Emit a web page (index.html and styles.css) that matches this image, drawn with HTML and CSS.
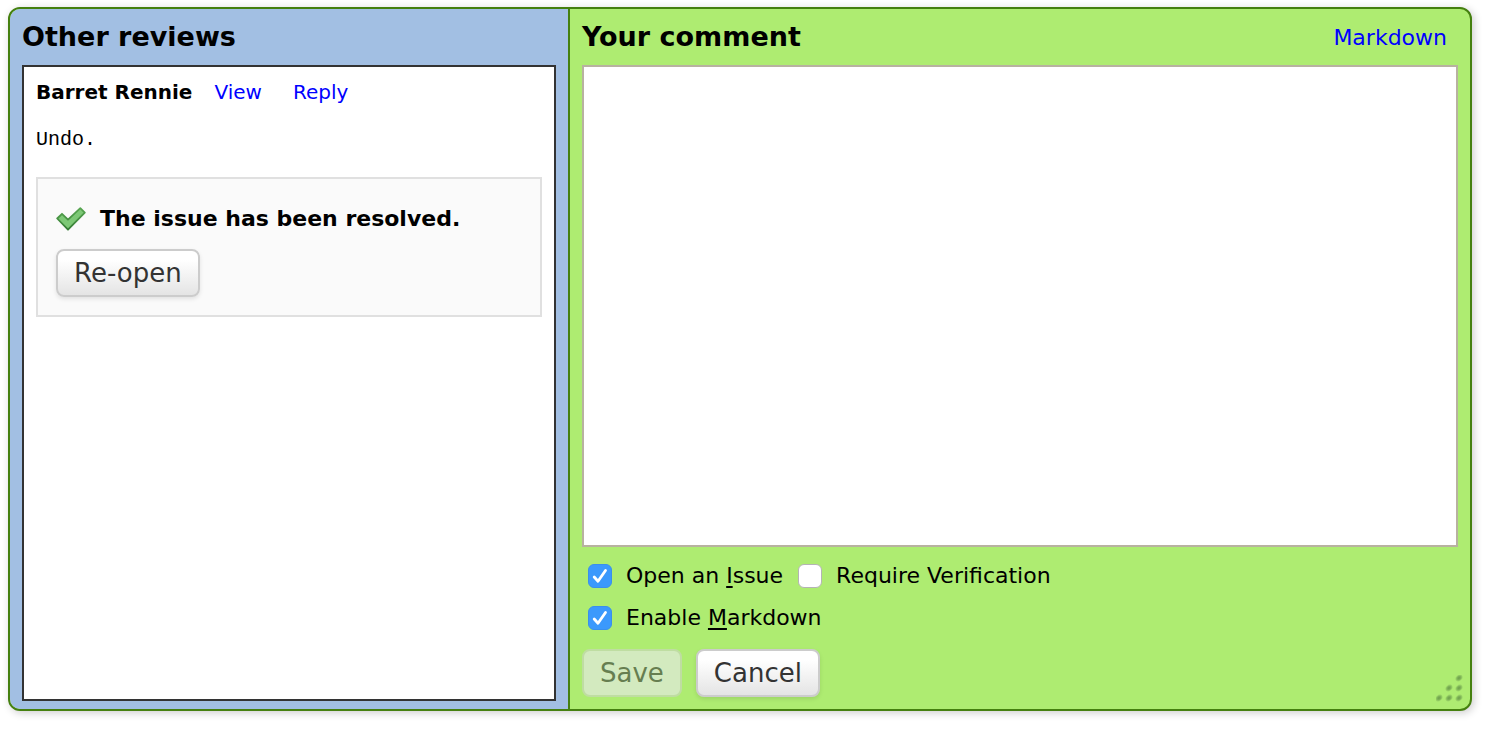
FILE: index.html
```html
<!DOCTYPE html>
<html lang="en">
<head>
<meta charset="utf-8">
<title>Your comment</title>
<link rel="stylesheet" href="styles.css">
</head>
<body>
<main class="comment-dialog">
  <section class="reviews">
    <h1 class="title">Other reviews</h1>
    <div class="review-list">
      <article class="review">
        <header class="review-header">
          <strong class="reviewer">Barret Rennie</strong>
          <a class="link" href="#view">View</a>
          <a class="link" href="#reply">Reply</a>
        </header>
        <pre class="review-text">Undo.</pre>
        <div class="issue">
          <p class="issue-state">
            <svg class="issue-icon" viewBox="0 0 30 24" aria-hidden="true">
              <defs>
                <linearGradient id="edge" x1="0" y1="0" x2="0" y2="1">
                  <stop offset="0" stop-color="#57a550"/>
                  <stop offset="1" stop-color="#347c34"/>
                </linearGradient>
              </defs>
              <path d="M1.2 11.5 L6 6.8 L12 12.6 L24.3 1.2 L28.8 5.6 L12 22.7 Z" fill="#7dc876" stroke="url(#edge)" stroke-width="1.8" stroke-linejoin="round"/>
            </svg>
            <strong>The issue has been resolved.</strong>
          </p>
          <button class="button" type="button">Re-open</button>
        </div>
      </article>
    </div>
  </section>
  <form class="comment">
    <header class="comment-header">
      <h1 class="title"><label for="comment-text">Your comment</label></h1>
      <a class="markdown-link" href="#markdown">Markdown</a>
    </header>
    <textarea class="comment-text" id="comment-text"></textarea>
    <div class="options">
      <div class="option-row">
        <span class="option"><input class="checkbox" type="checkbox" id="open-issue" checked><label for="open-issue">Open an <u>I</u>ssue</label></span>
        <span class="option"><input class="checkbox" type="checkbox" id="verify"><label for="verify">Require Verification</label></span>
      </div>
      <div class="option-row">
        <span class="option"><input class="checkbox" type="checkbox" id="markdown" checked><label for="markdown">Enable <u>M</u>arkdown</label></span>
      </div>
    </div>
    <div class="actions">
      <button class="button" type="submit" disabled>Save</button>
      <button class="button" type="button">Cancel</button>
    </div>
    <svg class="grip" viewBox="0 0 28 28" aria-hidden="true">
      <defs>
        <radialGradient id="dot" cx="0.5" cy="0.5" r="0.5">
          <stop offset="0" stop-color="#6b9d49"/>
          <stop offset="0.5" stop-color="#7fb457"/>
          <stop offset="1" stop-color="#a2dd6b"/>
        </radialGradient>
      </defs>
      <g fill="url(#dot)">
        <ellipse cx="23" cy="3" rx="4" ry="3" transform="rotate(-40 23 3)"/>
        <ellipse cx="13" cy="13" rx="4" ry="3" transform="rotate(-40 13 13)"/>
        <ellipse cx="23" cy="13" rx="4" ry="3" transform="rotate(-40 23 13)"/>
        <ellipse cx="3" cy="23" rx="4" ry="3" transform="rotate(-40 3 23)"/>
        <ellipse cx="13" cy="23" rx="4" ry="3" transform="rotate(-40 13 23)"/>
        <ellipse cx="23" cy="23" rx="4" ry="3" transform="rotate(-40 23 23)"/>
      </g>
    </svg>
  </form>
</main>
</body>
</html>
```
FILE: styles.css
```css
* {
  box-sizing: border-box;
}

body {
  min-height: 100vh;
  margin: 0;
  padding: 7px 17px 20px 8px;
  background: #fff;
  color: #000;
  font-family: Verdana, "DejaVu Sans", sans-serif;
  font-size: 22px;
}

.comment-dialog {
  display: grid;
  grid-template-columns: 560px 1fr;
  border: 2px solid #45800f;
  border-radius: 12px;
  background: #aeec71;
  box-shadow: 2px 2px 8px rgba(0, 0, 0, 0.2);
}

.title {
  margin: 0;
  font-size: 27px;
  line-height: 56px;
}

.reviews {
  display: flex;
  flex-direction: column;
  padding: 0 12px 8px;
  border-right: 2px solid #45800f;
  border-radius: 10px 0 0 10px;
  background: #a2bfe3;
}

.review-list {
  flex: 1;
  padding: 12px;
  border: 2px solid #333;
  background: #fff;
}

.review-header {
  display: flex;
  font-size: 20px;
  line-height: 26px;
}

.reviewer {
  margin-right: 22px;
}

.link {
  margin-right: 31px;
}

.link,
.markdown-link {
  color: #00f;
  text-decoration: none;
}

.review-text {
  margin: 22px 0 24px;
  font: 20px/26px "Courier New", "Liberation Mono", monospace;
}

.issue {
  padding: 18px;
  border: 2px solid #e0e0e0;
  background: #fafafa;
}

.issue-state {
  display: flex;
  align-items: center;
  gap: 14px;
  margin: 0 0 8px;
  line-height: 44px;
}

.issue-icon {
  width: 30px;
  height: 24px;
}

.button {
  height: 48px;
  padding: 0 16px;
  border: 2px solid #ccc;
  border-radius: 8px;
  background: linear-gradient(#fff 20%, #e4e4e4);
  box-shadow: 0 2px 4px rgba(0, 0, 0, 0.1);
  color: #333;
  font: inherit;
  font-size: 26px;
}

.button:disabled {
  border-color: #bfdda2;
  background: #d3eabf;
  box-shadow: none;
  color: #667e50;
}

.comment {
  position: relative;
  display: flex;
  flex-direction: column;
  padding: 0 12px;
}

.comment-header {
  display: flex;
  justify-content: space-between;
  align-items: center;
  padding-right: 11px;
}

.comment-text {
  display: block;
  width: 100%;
  height: 482px;
  padding: 8px;
  border: 2px solid #b8b2a0;
  background: #fff;
  font: 20px/26px "Courier New", "Liberation Mono", monospace;
  resize: none;
}

.options {
  padding: 8px 6px 10px;
}

.option-row {
  display: flex;
  gap: 15px;
  line-height: 42px;
}

.option {
  display: flex;
  align-items: center;
  gap: 14px;
}

.option u {
  text-underline-offset: 3px;
  text-decoration-thickness: 2px;
}

.checkbox {
  appearance: none;
  width: 24px;
  height: 24px;
  margin: 0;
  border: 1px solid #b4b4b4;
  border-radius: 6px;
  background: #fff;
}

.checkbox:checked {
  border-color: #3a8fec;
  background: #3b99fc url("data:image/svg+xml,%3Csvg xmlns='http://www.w3.org/2000/svg' viewBox='0 0 22 22'%3E%3Cpath d='M5.2 12 L9 16.2 L16.5 5.5' fill='none' stroke='white' stroke-width='2.8' stroke-linecap='round' stroke-linejoin='round'/%3E%3C/svg%3E") center / 22px 22px no-repeat;
}

.actions {
  display: flex;
  gap: 14px;
  padding-bottom: 12px;
}

.grip {
  position: absolute;
  right: 6px;
  bottom: 6px;
  width: 28px;
  height: 28px;
}
```
